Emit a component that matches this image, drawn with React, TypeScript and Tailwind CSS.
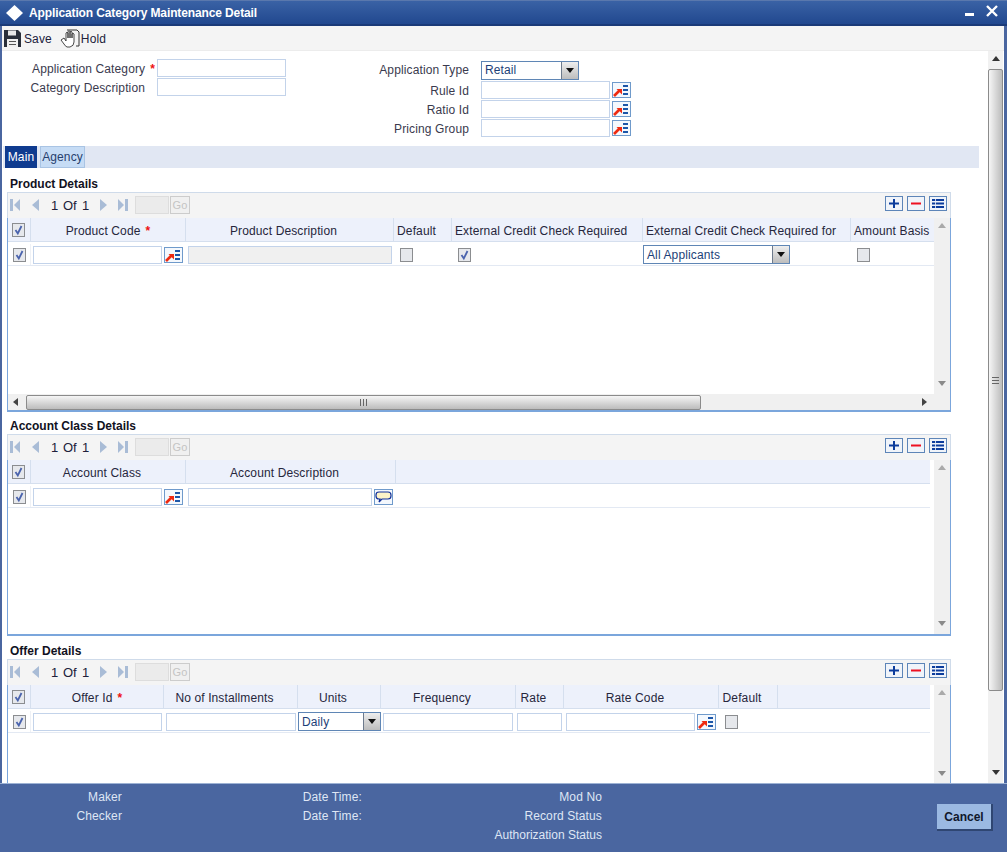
import React from 'react';

const Tri = ({ dir, color = '#555' }: { dir: 'up' | 'down' | 'left' | 'right'; color?: string }) => {
  const pts = { up: '0,5 4,0 8,5', down: '0,0 8,0 4,5', left: '5,0 5,8 0,4', right: '0,0 0,8 5,4' }[dir];
  return (
    <svg width="8" height="8" viewBox="0 0 8 8" className="block" style={{ overflow: 'visible' }}>
      <polygon points={pts} fill={color} />
    </svg>
  );
};

const Input = ({ className = 'w-[129px]', disabled }: { className?: string; disabled?: boolean }) => (
  <div className={`h-[18px] border border-[#c3d3ea] ${disabled ? 'bg-[#f0f0f0]' : 'bg-white'} ${className}`} />
);

const LovButton = () => (
  <div className="w-[19px] h-[16px] shrink-0">
    <svg width="19" height="16" viewBox="0 0 19 16" className="block">
      <rect x="0.5" y="0.5" width="18" height="15" fill="#f4f8fd" stroke="#6f9acb" />
      <path d="M2 14 L8 8" stroke="#ee2a10" strokeWidth="2.6" />
      <path d="M4.5 7 H10 V12.5 Z" fill="#ee2a10" />
      <rect x="11" y="3" width="5" height="2" fill="#1c56a8" />
      <rect x="11" y="7" width="5" height="2" fill="#1c56a8" />
      <rect x="11" y="11" width="5" height="2" fill="#1c56a8" />
    </svg>
  </div>
);

const CommentButton = () => (
  <svg width="19" height="16" viewBox="0 0 19 16" className="block shrink-0">
    <rect x="0.5" y="0.5" width="18" height="15" fill="#f4f8fd" stroke="#6f9acb" />
    <path d="M5 3 H14 Q17 3 17 6 V7 Q17 10 14 10 H8 L5 13 L6 10 H5 Q2 10 2 7 V6 Q2 3 5 3 Z" fill="#fdf3c8" stroke="#12309a" strokeWidth="1.2" />
  </svg>
);

const Check = ({ checked }: { checked?: boolean }) => (
  <svg width="13" height="14" viewBox="0 0 13 14" className="block shrink-0">
    <rect x="0.5" y="0.5" width="12" height="13" fill="#e6e8ec" stroke="#8b8d90" />
    {checked && <path d="M3.5 7 L5.8 10.5 L9.5 3" fill="none" stroke="#4a63ad" strokeWidth="1.8" />}
  </svg>
);

const Select = ({ value, className }: { value: string; className: string }) => (
  <div className={`h-[19px] border border-[#5f86b5] bg-white flex items-center justify-between ${className}`}>
    <span className="pl-[3px] text-[#1d3f78]">{value}</span>
    <div className="w-[17px] h-[17px] border-l border-[#6d7a8c] bg-gradient-to-b from-[#eeeeee] to-[#bdbdbd] flex items-center justify-center">
      <svg width="8" height="5" viewBox="0 0 8 5" className="block">
        <polygon points="0,0 8,0 4,5" fill="#111" />
      </svg>
    </div>
  </div>
);

const Star = () => <span className="text-[#ee1111] font-bold ml-[5px]">*</span>;

const FormLabel = ({ text, className, star }: { text: string; className: string; star?: boolean }) => (
  <div className={`h-[18px] text-right text-[#3a3a4e] whitespace-nowrap ${className}`}>
    {text}
    {star && <Star />}
  </div>
);

const PAGER_ICON = '#a9bcd6';

const Pager = () => (
  <div className="h-[26px] bg-[#f4f4f4] border-t border-x border-[#cfdbea] flex items-center pb-[2px]">
    <div className="flex items-center ml-[2px]">
      <svg width="11" height="12" viewBox="0 0 11 12" className="block">
        <rect x="0" y="0" width="3" height="12" fill={PAGER_ICON} />
        <polygon points="10,0 10,12 4,6" fill={PAGER_ICON} />
      </svg>
      <svg width="7" height="12" viewBox="0 0 7 12" className="block ml-[11px]">
        <polygon points="7,0 7,12 0,6" fill={PAGER_ICON} />
      </svg>
      <span className="ml-[12px] pt-[2px] w-[12px] text-[#20203a] text-[13px] tracking-normal">1</span>
      <span className="w-[19px] pt-[2px] text-[#20203a] text-[13px] tracking-normal">Of</span>
      <span className="w-[18px] pt-[2px] text-[#20203a] text-[13px] tracking-normal">1</span>
      <svg width="7" height="12" viewBox="0 0 7 12" className="block">
        <polygon points="0,0 0,12 7,6" fill={PAGER_ICON} />
      </svg>
      <svg width="11" height="12" viewBox="0 0 11 12" className="block ml-[11px]">
        <polygon points="0,0 0,12 6,6" fill={PAGER_ICON} />
        <rect x="7" y="0" width="3" height="12" fill={PAGER_ICON} />
      </svg>
      <div className="ml-[6px] w-[34px] h-[18px] bg-[#ebebeb] border border-[#dddddd]" />
      <div className="ml-[1px] w-[20px] h-[18px] bg-[#f0f0f0] border border-[#cccccc] text-[#c4c4c4] text-[11px] leading-[16px] text-center">Go</div>
    </div>
    <div className="ml-auto mr-[3px] mb-[3px] flex gap-[4px]">
      <svg width="18" height="15" viewBox="0 0 18 15" className="block">
        <rect x="0.5" y="0.5" width="17" height="14" fill="#f0f4fa" stroke="#5d85b8" />
        <path d="M9 3 V12 M4 7.5 H14" stroke="#0c3c9c" strokeWidth="2" />
      </svg>
      <svg width="18" height="15" viewBox="0 0 18 15" className="block">
        <rect x="0.5" y="0.5" width="17" height="14" fill="#f0f4fa" stroke="#5d85b8" />
        <path d="M4 7.5 H14" stroke="#ee1122" strokeWidth="2" />
      </svg>
      <svg width="18" height="15" viewBox="0 0 18 15" className="block">
        <rect x="0.5" y="0.5" width="17" height="14" fill="#f0f4fa" stroke="#5d85b8" />
        <path d="M3 4 H15 M3 7.5 H15 M3 11 H15" stroke="#0c3c9c" strokeWidth="1.8" />
        <path d="M6.5 3 V12" stroke="#f0f4fa" strokeWidth="0.8" />
      </svg>
    </div>
  </div>
);

const HeadCell = ({ text, star, align = 'center' }: { text?: string; star?: boolean; align?: 'center' | 'left' }) => (
  <div
    className={`h-full pt-[2px] border-r border-[#d5dfee] flex items-center whitespace-nowrap text-[#26263c] overflow-hidden ${
      align === 'left' ? 'pl-[3px]' : star ? 'justify-center' : 'justify-center pr-[12px]'
    }`}
  >
    {text}
    {star && <Star />}
  </div>
);

const HeadCheck = () => (
  <div className="h-full border-r border-[#d5dfee] flex items-center pl-[4px]">
    <Check checked />
  </div>
);

const RowCheck = () => (
  <div className="h-full border-r border-[#eef1f6] flex items-center pl-[5px]">
    <Check checked />
  </div>
);

const VScroll = () => (
  <div className="w-[16px] bg-[#f0f0f0] flex flex-col justify-between items-center py-[5px] shrink-0">
    <Tri dir="up" color="#a9a9a9" />
    <Tri dir="down" color="#8a8a8a" />
  </div>
);

const HScroll = () => (
  <div className="h-[16px] bg-[#f0f0f0] flex items-center">
    <div className="w-[18px] flex justify-center"><Tri dir="left" color="#444" /></div>
    <div className="w-[675px] h-[15px] border border-[#8b8b8b] rounded-[2px] bg-gradient-to-b from-[#f6f6f6] to-[#bcbcbc] flex items-center justify-center gap-[1px]">
      <span className="w-[1px] h-[7px] bg-[#666]" />
      <span className="w-[1px] h-[7px] ml-[1px] bg-[#666]" />
      <span className="w-[1px] h-[7px] ml-[1px] bg-[#666]" />
    </div>
    <div className="ml-[221px] w-[8px]"><Tri dir="right" color="#444" /></div>
  </div>
);

const Heading = ({ text }: { text: string }) => (
  <div className="h-[16px] pl-[3px] leading-[16px] font-bold tracking-normal text-[#111122]">{text}</div>
);

const App: React.FC = () => {
  return (
    <div className="w-[1007px] h-[852px] flex flex-col overflow-hidden bg-[#4a66a0] font-['Liberation_Sans',Arial,sans-serif] text-[12px] tracking-[0.12px]">
      {/* title bar */}
      <div className="h-[26px] shrink-0 flex items-center bg-gradient-to-b from-[#3a62a5] to-[#21488f] border-t border-[#5a78ad] border-b-2 border-b-[#1a3a78] pl-[6px] pr-[9px]">
        <svg width="17" height="16" viewBox="0 0 17 16" className="block">
          <polygon points="8.5,0 17,8 8.5,16 0,8" fill="#fff" />
        </svg>
        <span className="ml-[6px] text-white font-bold tracking-[-0.12px]">Application Category Maintenance Detail</span>
        <div className="ml-auto w-[9px] h-[3px] mt-[4px] bg-white" />
        <svg width="12" height="12" viewBox="0 0 12 12" className="block ml-[12px] mb-[3px]">
          <path d="M1 1 L11 11 M11 1 L1 11" stroke="#fff" strokeWidth="2.4" />
        </svg>
      </div>

      {/* window body */}
      <div className="flex-1 min-h-0 ml-[2px] mr-[3px] flex flex-col bg-white">
        <div className="h-[25px] shrink-0 bg-[#f4f4f4] border-b border-[#ececec] flex items-center pl-[2px] text-[#20203a]">
          <svg width="17" height="17" viewBox="0 0 17 17" className="block">
            <path d="M0 0 H14 L17 3 V17 H0 Z" fill="#2a2f3a" />
            <rect x="4" y="0.5" width="8" height="5" fill="#e8e8e8" />
            <rect x="3" y="9" width="11" height="8" fill="#f0f0f0" />
            <rect x="5" y="11" width="7" height="1" fill="#555" />
            <rect x="5" y="14" width="7" height="1" fill="#555" />
          </svg>
          <span className="ml-[3px] pt-[2px]">Save</span>
          <svg width="20" height="19" viewBox="0 0 20 19" className="block ml-[8px]">
            <path d="M7 1 H17 L19 3 V17 H16" fill="none" stroke="#333" />
            <path d="M1 11 L4 9 L6 12 V4 Q7 2.5 8 4 V9 V2.5 Q9 1 10 2.5 V9 V3 Q11 1.5 12 3 V9 V5 Q13 3.5 14 5 V13 Q14 17 10 18 H7 Q5 17 4 15 Z" fill="#fff" stroke="#333" strokeWidth="0.9" />
          </svg>
          <span className="ml-[1px] pt-[2px]">Hold</span>
        </div>

        <div className="flex-1 min-h-0 flex">
          <div className="flex-1 min-w-0 overflow-hidden">
            {/* header form */}
            <div className="h-[95px] flex">
              <div className="w-[298px] pt-[8px] flex flex-col gap-px">
                <div className="flex items-center">
                  <FormLabel text="Application Category" star className="w-[153px] leading-[20px]" />
                  <Input className="ml-[2px] w-[129px]" />
                </div>
                <div className="flex items-center">
                  <FormLabel text="Category Description" className="w-[143px] leading-[20px]" />
                  <Input className="ml-[12px] w-[129px]" />
                </div>
              </div>
              <div className="pt-[9px] flex flex-col gap-[1px]">
                <div className="flex items-center h-[20px]">
                  <FormLabel text="Application Type" className="w-[169px] leading-[18px]" />
                  <Select value="Retail" className="ml-[12px] w-[98px]" />
                </div>
                {['Rule Id', 'Ratio Id', 'Pricing Group'].map((t) => (
                  <div key={t} className="flex items-center h-[18px]">
                    <FormLabel text={t} className="w-[169px] leading-[20px]" />
                    <Input className="ml-[12px] w-[129px]" />
                    <div className="ml-[2px]"><LovButton /></div>
                  </div>
                ))}
              </div>
            </div>

            {/* tabs */}
            <div className="h-[22px] ml-[1px] bg-[#e1e7f3] flex items-stretch pl-[2px] gap-[3px]">
              <div className="w-[32px] bg-[#0f3b8f] text-white flex items-center justify-center">Main</div>
              <div className="w-[45px] bg-[#c6dcf5] border border-[#a9c4e4] text-[#26406e] flex items-center justify-center">Agency</div>
            </div>

            <div className="ml-[5px] w-[944px] pt-[8px]">
              {/* product details */}
              <Heading text="Product Details" />
              <Pager />
              <div className="h-[194px] border-x border-b-2 border-[#7ba6dc] flex flex-col">
                <div className="flex-1 min-h-0 flex">
                  <div className="flex-1 min-w-0">
                    <div className="h-[24px] bg-[#edf1fb] border-b border-[#d5dfee] grid grid-cols-[23px_155px_208px_58px_191px_208px_83px]">
                      <HeadCheck />
                      <HeadCell text="Product Code" star />
                      <HeadCell text="Product Description" />
                      <HeadCell text="Default" />
                      <HeadCell text="External Credit Check Required" align="left" />
                      <HeadCell text="External Credit Check Required for" align="left" />
                      <div className="h-full pt-[2px] flex items-center pl-[3px] whitespace-nowrap text-[#26263c]">Amount Basis</div>
                    </div>
                    <div className="h-[24px] pt-[2px] border-b border-[#e3e9f3] grid grid-cols-[23px_155px_208px_58px_191px_208px_83px]">
                      <RowCheck />
                      <div className="flex items-center pl-[2px] gap-[2px]"><Input className="w-[129px]" /><LovButton /></div>
                      <div className="flex items-center pl-[2px]"><Input disabled className="w-[204px]" /></div>
                      <div className="flex items-center pl-[6px]"><Check /></div>
                      <div className="flex items-center pl-[6px]"><Check checked /></div>
                      <div className="flex items-center"><Select value="All Applicants" className="w-[147px]" /></div>
                      <div className="flex items-center pl-[6px]"><Check /></div>
                    </div>
                  </div>
                  <VScroll />
                </div>
                <HScroll />
              </div>

              {/* account class details */}
              <div className="mt-[6px]"><Heading text="Account Class Details" /></div>
              <Pager />
              <div className="h-[176px] border-x border-b-2 border-[#7ba6dc] flex">
                <div className="flex-1 min-w-0 pr-[4px]">
                  <div className="h-[24px] bg-[#edf1fb] border-b border-[#d5dfee] grid grid-cols-[23px_155px_210px_1fr]">
                    <HeadCheck />
                    <HeadCell text="Account Class" />
                    <HeadCell text="Account Description" />
                    <div />
                  </div>
                  <div className="h-[24px] pt-[2px] border-b border-[#e3e9f3] grid grid-cols-[23px_155px_210px_1fr]">
                    <RowCheck />
                    <div className="flex items-center pl-[2px] gap-[2px]"><Input className="w-[129px]" /><LovButton /></div>
                    <div className="flex items-center pl-[2px] gap-[2px]"><Input className="w-[184px]" /><CommentButton /></div>
                    <div />
                  </div>
                </div>
                <VScroll />
              </div>

              {/* offer details */}
              <div className="mt-[7px]"><Heading text="Offer Details" /></div>
              <Pager />
              <div className="h-[99px] border-x border-[#7ba6dc] flex">
                <div className="flex-1 min-w-0 pr-[4px]">
                  <div className="h-[24px] bg-[#edf1fb] border-b border-[#d5dfee] grid grid-cols-[23px_133px_134px_83px_135px_48px_155px_59px_1fr]">
                    <HeadCheck />
                    <HeadCell text="Offer Id" star />
                    <HeadCell text="No of Installments" />
                    <HeadCell text="Units" />
                    <HeadCell text="Frequency" />
                    <HeadCell text="Rate" />
                    <HeadCell text="Rate Code" />
                    <HeadCell text="Default" />
                    <div />
                  </div>
                  <div className="h-[24px] pt-[2px] border-b border-[#e3e9f3] grid grid-cols-[23px_133px_134px_83px_135px_48px_155px_59px_1fr]">
                    <RowCheck />
                    <div className="flex items-center pl-[2px]"><Input className="w-[129px]" /></div>
                    <div className="flex items-center pl-[2px]"><Input className="w-[130px]" /></div>
                    <div className="flex items-center"><Select value="Daily" className="w-[83px]" /></div>
                    <div className="flex items-center pl-[2px]"><Input className="w-[130px]" /></div>
                    <div className="flex items-center pl-[1px]"><Input className="w-[45px]" /></div>
                    <div className="flex items-center pl-[2px] gap-[2px]"><Input className="w-[129px]" /><LovButton /></div>
                    <div className="flex items-center pl-[6px]"><Check /></div>
                    <div />
                  </div>
                </div>
                <VScroll />
              </div>
            </div>
          </div>

          {/* page scrollbar */}
          <div className="w-[15px] bg-[#f1f1f1] mr-px ml-[9px] flex flex-col items-center shrink-0">
            <div className="h-[18px] flex items-center justify-center"><Tri dir="up" color="#333" /></div>
            <div className="w-full h-[622px] border border-[#8b8b8b] rounded-[2px] bg-gradient-to-r from-[#f6f6f6] to-[#bcbcbc] flex flex-col items-center justify-center gap-[1px]">
              <span className="w-[7px] h-[1px] bg-[#666]" />
              <span className="w-[7px] h-[1px] mt-[1px] bg-[#666]" />
              <span className="w-[7px] h-[1px] mt-[1px] bg-[#666]" />
            </div>
            <div className="mt-auto h-[18px] flex items-center justify-center"><Tri dir="down" color="#333" /></div>
          </div>
        </div>
      </div>

      {/* footer */}
      <div className="h-[69px] shrink-0 border-t border-[#9db2d4] flex pt-[4px] pr-[14px] text-[#dfe6f5]">
        <div className="w-[122px] flex flex-col text-right leading-[19px]">
          <span>Maker</span>
          <span>Checker</span>
        </div>
        <div className="w-[240px] flex flex-col text-right leading-[19px]">
          <span>Date Time:</span>
          <span>Date Time:</span>
        </div>
        <div className="w-[240px] flex flex-col text-right leading-[19px]">
          <span>Mod No</span>
          <span>Record Status</span>
          <span className="tracking-normal">Authorization Status</span>
        </div>
        <button className="ml-auto mt-[16px] w-[56px] h-[27px] bg-[#9bb9e2] border-r-2 border-b-2 border-[#2f4672] font-bold tracking-normal text-[#10182c]">Cancel</button>
      </div>
    </div>
  );
};

export default App;
